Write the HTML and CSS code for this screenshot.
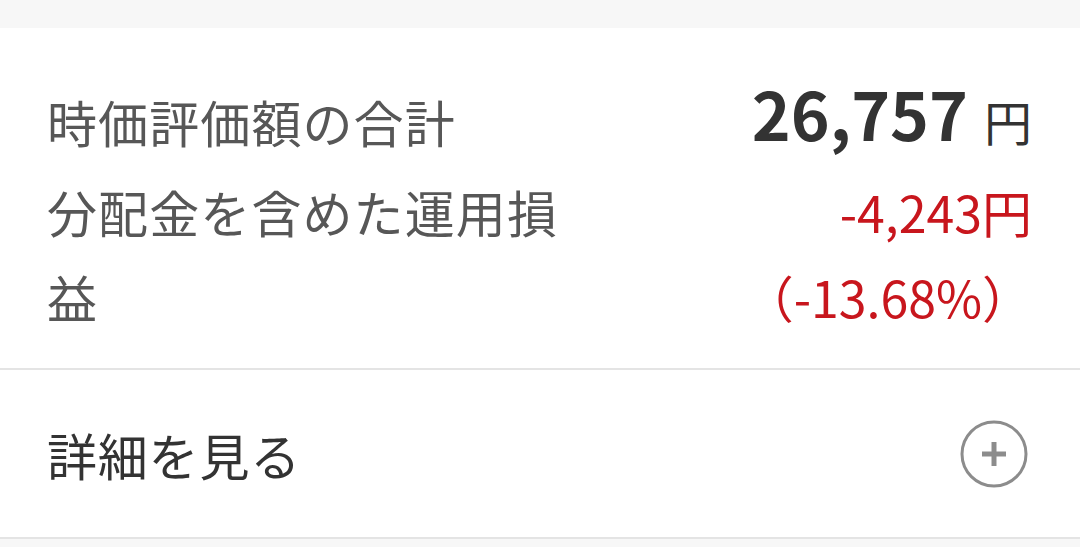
FILE: index.html
```html
<!DOCTYPE html>
<html lang="ja">
<head>
<meta charset="utf-8">
<link rel="stylesheet" href="styles.css">
</head>
<body>
<div class="top-band"></div>
<section class="card">
  <div class="summary">
    <div class="row">
      <div class="label">時価評価額の合計</div>
      <div class="total"><span class="total-num">26,757</span><span class="total-unit">円</span></div>
    </div>
    <div class="row">
      <div class="label label-wrap">分配金を含めた運用損益</div>
      <div class="pl">
        <div>-4,243円</div>
        <div>（-13.68%）</div>
      </div>
    </div>
  </div>
  <div class="details">
    <div class="details-text">詳細を見る</div>
    <svg class="plus" width="70" height="70" viewBox="0 0 70 70">
      <circle cx="35" cy="35" r="32" fill="none" stroke="#8c8c8c" stroke-width="3"/>
      <line x1="23" y1="35" x2="47" y2="35" stroke="#8c8c8c" stroke-width="5"/>
      <line x1="35" y1="23" x2="35" y2="47" stroke="#8c8c8c" stroke-width="5"/>
    </svg>
  </div>
</section>
<div class="bottom-band"></div>
</body>
</html>
```
FILE: styles.css
```css
html, body {
  margin: 0;
  padding: 0;
  background: #f7f7f7;
  font-family: "Noto Sans CJK JP", "Noto Sans", sans-serif;
}
.top-band {
  height: 28px;
  background: #f7f7f7;
}
.card {
  background: #ffffff;
}
.summary {
  padding: 51px 48px 29px 47px;
  border-bottom: 2px solid #e4e4e4;
}
.row {
  display: flex;
  justify-content: space-between;
  align-items: flex-start;
}
.row + .row {
  margin-top: 5px;
}
.label {
  font-size: 50px;
  line-height: 85px;
  color: #575757;
  letter-spacing: 1.1px;
}
.label-wrap {
  max-width: 530px;
}
.total {
  height: 85px;
  line-height: 85px;
  color: #333333;
  white-space: nowrap;
}
.total-num {
  font-size: 66px;
  font-weight: 700;
  line-height: 1;
}
.total-unit {
  font-size: 48px;
  line-height: 1;
  margin-left: 16px;
}
.pl {
  text-align: right;
  font-size: 50px;
  line-height: 85px;
  color: #c8161d;
  white-space: nowrap;
}
.details {
  height: 167px;
  display: flex;
  align-items: center;
  justify-content: space-between;
  padding: 0 51px 0 47px;
  border-bottom: 2px solid #e4e4e4;
}
.details-text {
  font-size: 50px;
  color: #333333;
  letter-spacing: 0.8px;
}
.plus {
  display: block;
}
.bottom-band {
  height: 20px;
  background: #f7f7f7;
}
```
